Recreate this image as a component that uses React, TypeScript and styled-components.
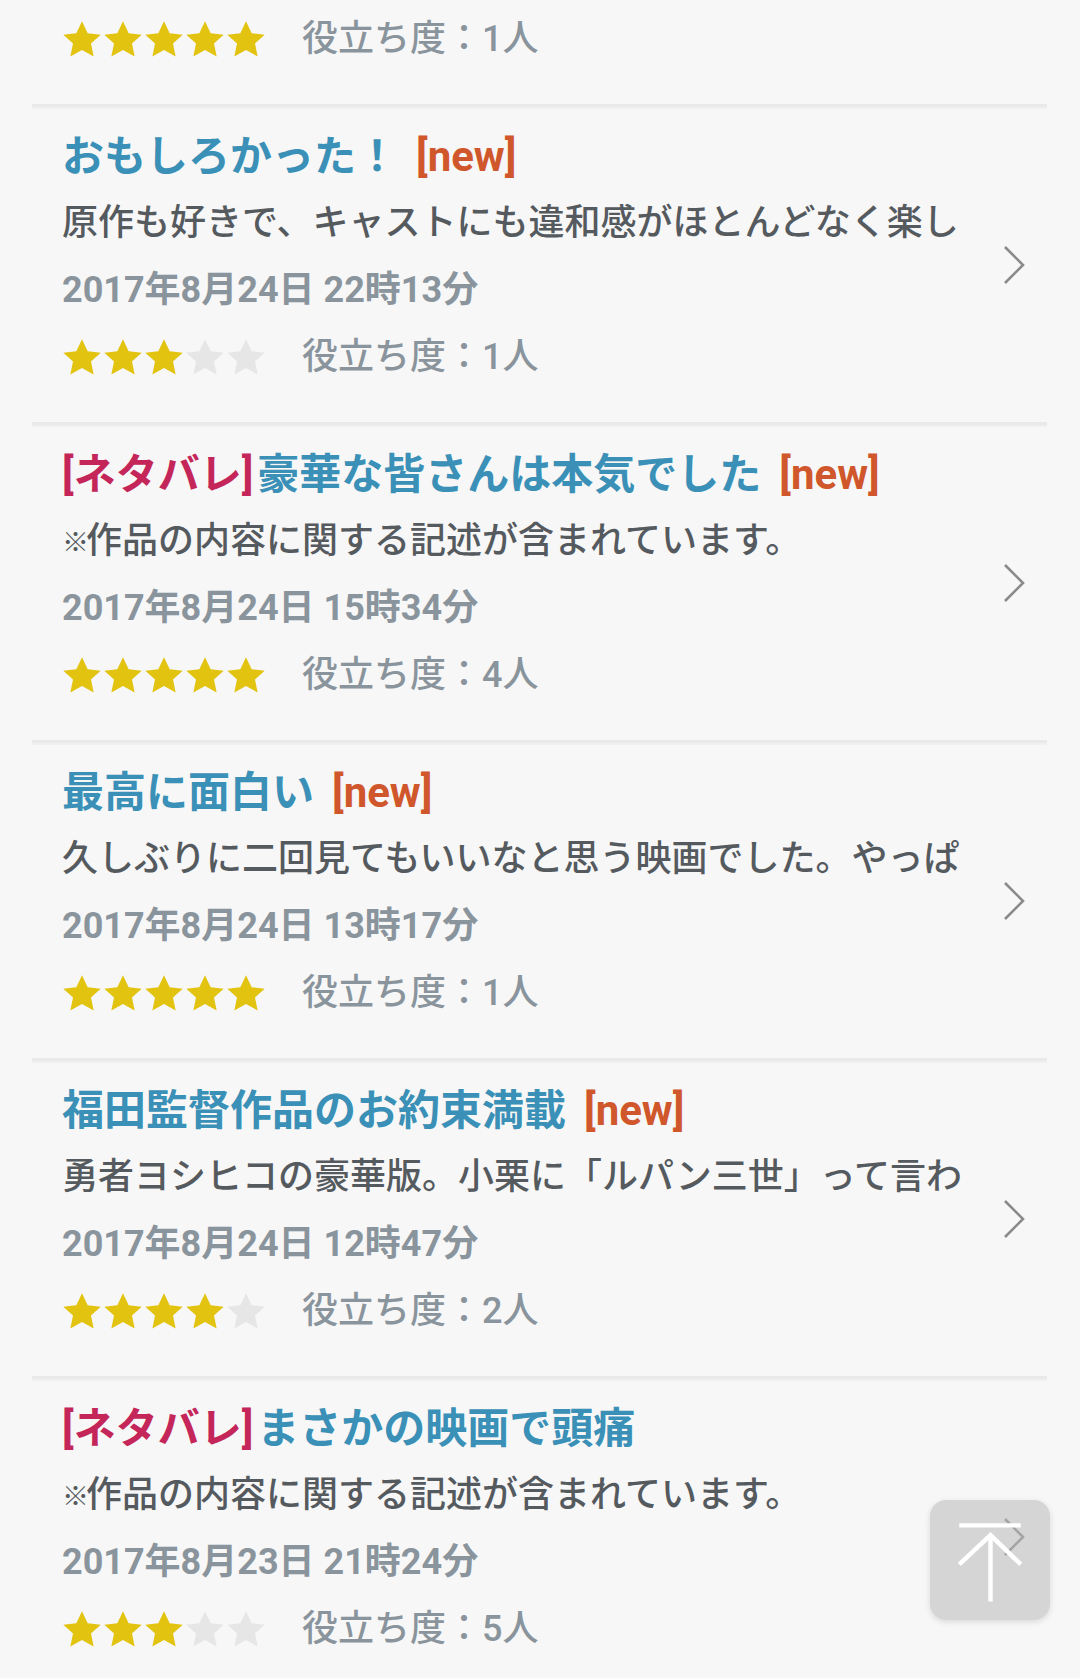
import React from 'react'
import styled, { createGlobalStyle } from 'styled-components'

const GlobalStyle = createGlobalStyle`
	html, body {
		margin: 0;
		padding: 0;
		background: #f7f7f7;
	}
	body {
		font-family: Roboto, 'Noto Sans CJK JP', sans-serif;
		-webkit-font-smoothing: antialiased;
	}
`

const Page = styled.div`
	min-height: 1678px;
	background: #f7f7f7;
	overflow: hidden;
`

const List = styled.ul`
	list-style: none;
	margin: 0;
	padding: 0 33px 0 32px;
`

const Item = styled.li<{ partial?: boolean }>`
	display: flex;
	align-items: center;
	padding: ${(p) => (p.partial ? '6px 22px 31px 30px' : '16px 22px 31px 30px')};
	border-top: ${(p) => (p.partial ? 'none' : '3px solid #e9e9e9')};
	box-shadow: ${(p) => (p.partial ? 'none' : 'inset 0 2px 0 #f0f0f0')};
`

const Content = styled.div`
	flex: 1;
	min-width: 0;
`

const Line = styled.div`
	height: 67px;
	line-height: 67px;
	white-space: nowrap;
`

const Title = styled(Line)`
	font-size: 42px;
	font-weight: 700;
	color: #3a90b6;
`

const Spoiler = styled.span`
	color: #c4265a;
	margin-right: 4px;
`

const NewTag = styled.span`
	color: #d0562b;
	margin-left: 18px;
`

const Body = styled(Line)`
	font-size: 36px;
	font-weight: 500;
	color: #555a5f;
`

const Mark = styled.span`
	display: inline-block;
	font-size: 27px;
	font-weight: 700;
	width: 24px;
	vertical-align: 1px;
`

const DateText = styled(Line)`
	font-size: 36px;
	font-weight: 700;
	color: #8a949c;
`

const Meta = styled(Line)`
	display: flex;
	align-items: center;
`

const Stars = styled.div`
	display: flex;
	gap: 1px;
	margin-right: 36px;
`

const Helpful = styled.span`
	font-size: 36px;
	font-weight: 500;
	color: #8a949c;
`

const Chevron = styled.svg`
	flex: none;
	width: 22px;
	height: 40px;
	margin: 16px 0 0 20px;
`

const TopButton = styled.button`
	position: fixed;
	right: 30px;
	bottom: 58px;
	width: 120px;
	height: 120px;
	border: none;
	border-radius: 16px;
	padding: 0;
	background: rgba(185, 185, 185, 0.55);
	box-shadow: 0 2px 6px rgba(0, 0, 0, 0.12);
	display: flex;
	align-items: center;
	justify-content: center;
`

const Star = ({ on }: { on: boolean }) => (
	<svg width="40" height="40" viewBox="0 0 24 24">
		<path
			d="M12 .8l3.4 7.1 7.8.9-5.8 5.3 1.6 7.8L12 18l-7 3.9 1.6-7.8L.8 8.8l7.8-.9z"
			fill={on ? '#e2c30f' : '#e6e6e6'}
		/>
	</svg>
)

const MetaRow = ({ rating, helpful }: { rating: number; helpful: number }) => (
	<Meta>
		<Stars>
			{[0, 1, 2, 3, 4].map((i) => (
				<Star key={i} on={i < rating} />
			))}
		</Stars>
		<Helpful>役立ち度：{helpful}人</Helpful>
	</Meta>
)

interface Review {
	title: string
	spoiler?: boolean
	isNew?: boolean
	body: string
	date: string
	rating: number
	helpful: number
}

const reviews: Review[] = [
	{
		title: 'おもしろかった！',
		isNew: true,
		body: '原作も好きで、キャストにも違和感がほとんどなく楽し',
		date: '2017年8月24日 22時13分',
		rating: 3,
		helpful: 1,
	},
	{
		title: '豪華な皆さんは本気でした',
		spoiler: true,
		isNew: true,
		body: '',
		date: '2017年8月24日 15時34分',
		rating: 5,
		helpful: 4,
	},
	{
		title: '最高に面白い',
		isNew: true,
		body: '久しぶりに二回見てもいいなと思う映画でした。やっぱ',
		date: '2017年8月24日 13時17分',
		rating: 5,
		helpful: 1,
	},
	{
		title: '福田監督作品のお約束満載',
		isNew: true,
		body: '勇者ヨシヒコの豪華版。小栗に「ルパン三世」って言わ',
		date: '2017年8月24日 12時47分',
		rating: 4,
		helpful: 2,
	},
	{
		title: 'まさかの映画で頭痛',
		spoiler: true,
		body: '',
		date: '2017年8月23日 21時24分',
		rating: 3,
		helpful: 5,
	},
]

export default function App() {
	return (
		<Page>
			<GlobalStyle />
			<List>
				<Item partial>
					<Content>
						<MetaRow rating={5} helpful={1} />
					</Content>
				</Item>
				{reviews.map((r, i) => (
					<Item key={i}>
						<Content>
							<Title>
								{r.spoiler && <Spoiler>[ネタバレ]</Spoiler>}
								{r.title}
								{r.isNew && <NewTag>[new]</NewTag>}
							</Title>
							{r.spoiler ? (
								<Body>
									<Mark>※</Mark>作品の内容に関する記述が含まれています。
								</Body>
							) : (
								<Body>{r.body}</Body>
							)}
							<DateText>{r.date}</DateText>
							<MetaRow rating={r.rating} helpful={r.helpful} />
						</Content>
						<Chevron viewBox="0 0 22 40">
							<polyline points="2,2 20,20 2,38" fill="none" stroke="#8a8a8a" strokeWidth="2.6" />
						</Chevron>
					</Item>
				))}
			</List>
			<TopButton aria-label="ページトップへ">
				<svg width="120" height="120" viewBox="0 0 123 123">
					<g stroke="#fff" strokeWidth="4.5" fill="none">
						<line x1="30" y1="26" x2="93" y2="26" />
						<line x1="62" y1="38" x2="62" y2="104" />
						<polyline points="30,66 62,36 93,66" />
					</g>
				</svg>
			</TopButton>
		</Page>
	)
}
